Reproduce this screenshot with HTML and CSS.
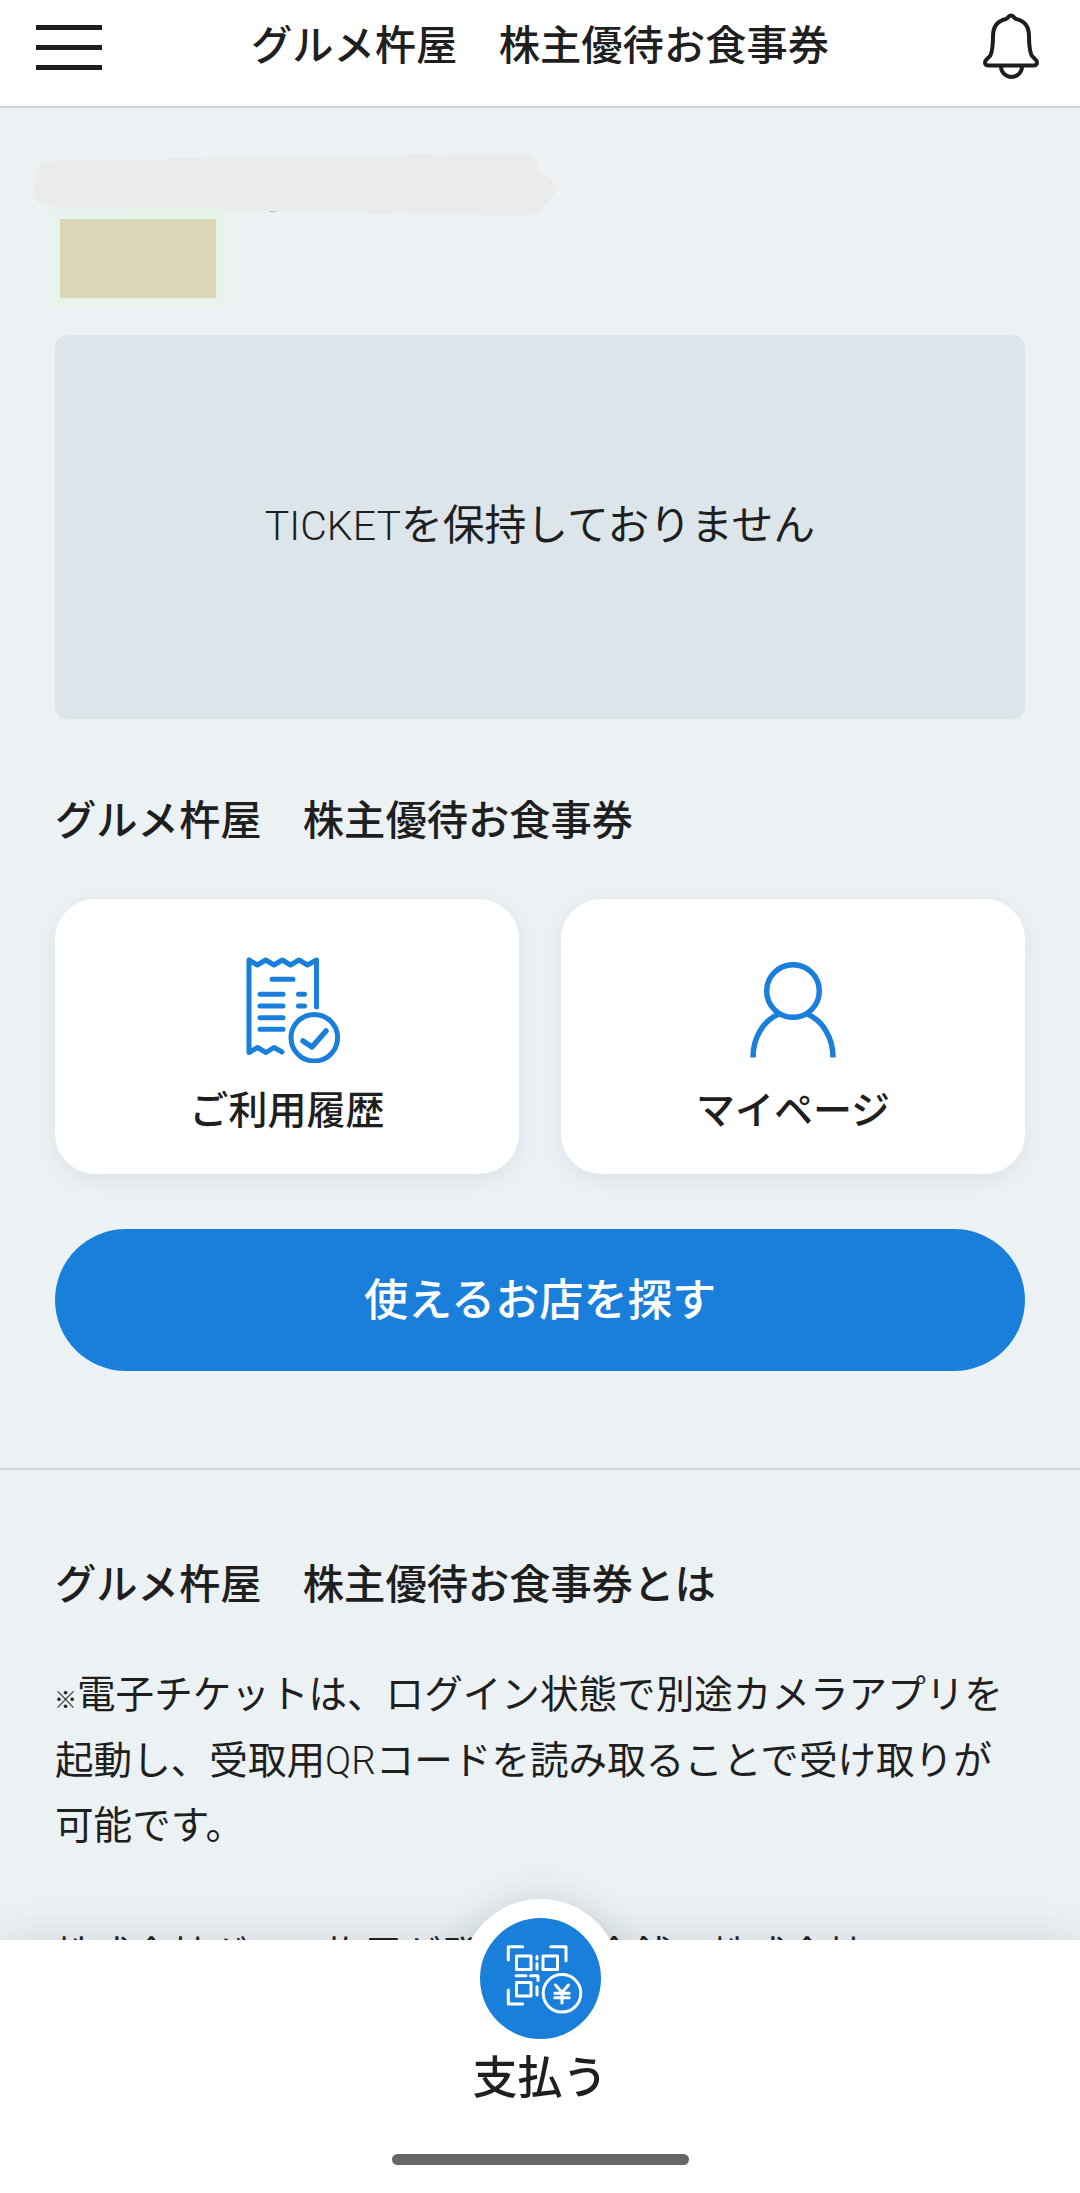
FILE: index.html
```html
<!DOCTYPE html>
<html lang="ja">
<head>
<meta charset="utf-8">
<title>グルメ杵屋 株主優待お食事券</title>
<link rel="stylesheet" href="styles.css">
</head>
<body>
<header class="topbar">
  <div class="burger"><span></span><span></span><span></span></div>
  <h1 class="topbar-title">グルメ杵屋　株主優待お食事券</h1>
  <svg class="bell" viewBox="0 0 56 66" width="56" height="66" fill="none" stroke="#1e1e1e" stroke-width="4" stroke-linejoin="round">
    <path d="M28 2.5C26 2.5 25 5 23 6C14 8 10 14 10 23C10 30 9.5 36 8 41C7 45 2 46 2 49.5C2 51.5 3.5 52.5 5 52.5H51C52.5 52.5 54 51.5 54 49.5C54 46 49 45 48 41C46.5 36 46 30 46 23C46 14 42 8 33 6C31 5 30 2.5 28 2.5Z"/>
    <path d="M18 53.5a10.500 10.500 0 0 0 21 0"/>
  </svg>
</header>

<main>
  <section class="account">
    <svg class="mask" viewBox="0 0 530 70" width="530" height="70">
      <ellipse cx="243" cy="61" rx="4" ry="1.200" fill="#b9bcbe"/>
      <ellipse cx="305" cy="61" rx="4" ry="1.200" fill="#c4c7c9"/>
      <path fill="#ebebeb" d="M17 11L493 3Q508 3 508 18L509 24Q525 26 525 40Q525 48 517 52Q510 66 495 66L28 57Q3 57 3 41Q3 34 6 28Q5 12 17 11Z"/>
    </svg>
    <div class="member-code"><div class="member-code-inner"></div></div>
  </section>

  <div class="ticket-empty">
    <p><span class="latin">TICKET</span>を保持しておりません</p>
  </div>

  <h2 class="section-title">グルメ杵屋　株主優待お食事券</h2>

  <div class="cards">
    <a class="card">
      <span class="card-icon">
        <svg viewBox="0 0 106 106" width="106" height="106" fill="none" stroke="#1a7fdb" stroke-width="5" stroke-linecap="round" stroke-linejoin="round">
          <path d="M82.500 50V3L73.500 8L65 3L56.500 8L48.300 3L40 8L31.700 3L23.300 8L15 3V95.500L23.500 90.500L32 95.500L40 90.500L48 95"/>
          <path d="M38 22.300H59M26 37.300H49M26 49H49M26 60.700H49M26 72.300H49M64.500 37.300H70.500M64.500 49H70.500"/>
          <circle cx="80.300" cy="80.700" r="23.300"/>
          <path d="M69 84L78 90L92 74" stroke-width="5.500"/>
        </svg>
      </span>
      <span class="card-label">ご利用履歴</span>
    </a>
    <a class="card">
      <span class="card-icon">
        <svg viewBox="0 0 86 96" width="86" height="96" fill="none" stroke="#1a7fdb" stroke-width="5.500">
          <circle cx="43" cy="29" r="26.300"/>
          <path d="M3 95.500C3 75 14 58 29 52M57 52C72 58 83 75 83 95.500"/>
        </svg>
      </span>
      <span class="card-label">マイページ</span>
    </a>
  </div>

  <a class="shop-button">使えるお店を探す</a>

  <hr class="divider">

  <h2 class="section-title about-title">グルメ杵屋　株主優待お食事券とは</h2>
  <p class="about-text"><span class="note-mark">※</span>電子チケットは、ログイン状態で別途カメラアプリを起動し、受取用<span class="latin">QR</span>コードを読み取ることで受け取りが可能です。</p>
  <p class="about-text about-next">株式会社グルメ杵屋が発行する金銭・株式会社</p>
</main>

<nav class="paybar">
  <div class="paybar-panel">
    <span class="paybar-label">支払う</span>
    <span class="home-indicator"></span>
  </div>
  <div class="pay-halo"></div>
  <a class="pay-button">
    <svg viewBox="0 0 121 121" width="121" height="121" fill="none" stroke="#fff" stroke-width="3" stroke-linecap="round" stroke-linejoin="round">
      <path d="M28.300 42V28.700H42.700M70.700 28.700H86V42.700M28.300 72V86H42.700"/>
      <rect x="36.500" y="38" width="14.500" height="13.500"/>
      <rect x="63" y="38" width="14.500" height="13.500"/>
      <rect x="36.500" y="64.500" width="14.500" height="13.500"/>
      <path d="M57 38.500V41M57 45.500V51M36 57.700H46M50.500 57.700H58V62.500M57 68.700V77"/>
      <circle cx="82" cy="75.300" r="18.800"/>
      <path d="M75.500 67L82 74.500L88.500 67M82 74.500V85M74.800 75.300H89.200M74.800 79.800H89.200"/>
    </svg>
  </a>
</nav>
</body>
</html>
```

FILE: styles.css
```css
* {
  box-sizing: border-box;
}

html,
body {
  margin: 0;
  padding: 0;
  height: 2193px;
  overflow: hidden;
}

body {
  background: #ecf1f4;
  color: #1f1f1f;
  font-family: "Noto Sans CJK JP", "Noto Sans", sans-serif;
}

h1,
h2,
p {
  margin: 0;
}

/* top bar */
.topbar {
  display: grid;
  grid-template-columns: 1fr auto 1fr;
  align-items: start;
  height: 108px;
  padding: 0 36px;
  background: #fff;
  border-bottom: 2px solid #d0d6da;
}

.burger {
  display: flex;
  flex-direction: column;
  gap: 15px;
  width: 66px;
  margin-top: 25px;
}

.burger span {
  display: block;
  height: 5px;
  background: #1e1e1e;
}

.topbar-title {
  font-size: 41.3px;
  font-weight: 500;
  line-height: 60px;
  margin-top: 12px;
  white-space: nowrap;
}

.bell {
  justify-self: end;
  margin: 13px 5px 0 0;
}

/* member block */
.account {
  position: relative;
  padding: 101px 0 0 49px;
}

.mask {
  position: absolute;
  left: 30px;
  top: 42px;
}

.member-code {
  position: relative;
  width: 177px;
  height: 99px;
  padding: 10px 10px 10px 11px;
  background: #e8f3ec;
}

.member-code-inner {
  height: 79px;
  background: #dbd7b6;
}

/* empty ticket panel */
.ticket-empty {
  display: flex;
  align-items: center;
  justify-content: center;
  height: 384px;
  margin: 27px 55px 0;
  padding-bottom: 11px;
  border-radius: 12px;
  background: #dce5ea;
  font-size: 41.8px;
  line-height: 60px;
}

.latin {
  font-family: Roboto, sans-serif;
  font-weight: 300;
  line-height: 0;
}

.ticket-empty .latin {
  font-size: 41px;
}

.section-title {
  margin: 68px 55px 0;
  font-size: 41.3px;
  font-weight: 500;
  line-height: 60px;
  white-space: nowrap;
}

/* shortcut cards */
.cards {
  display: grid;
  grid-template-columns: 464px 464px;
  gap: 42px;
  margin: 52px 55px 0;
}

.card {
  display: flex;
  flex-direction: column;
  align-items: center;
  height: 275px;
  padding-top: 58px;
  border-radius: 40px;
  background: #fff;
  box-shadow: 0 6px 22px rgba(60, 80, 95, 0.09);
}

.card-icon {
  display: flex;
  align-items: center;
  height: 106px;
}

.card-label {
  margin-top: 19px;
  font-size: 39px;
  font-weight: 500;
  line-height: 50px;
}

.shop-button {
  display: flex;
  align-items: center;
  justify-content: center;
  height: 142px;
  margin: 55px 55px 0;
  padding-bottom: 6px;
  border-radius: 71px;
  background: #1a7fdb;
  color: #fff;
  font-size: 44.2px;
  font-weight: 500;
}

.divider {
  height: 2px;
  margin: 97px 0 0;
  border: 0;
  background: #d0d6da;
}

.about-title {
  margin-top: 81px;
}

.about-text {
  margin: 48px 55px 0;
  font-size: 38.6px;
  line-height: 65.5px;
}

.about-next {
  margin-top: 64px;
  white-space: nowrap;
}

.note-mark {
  margin-left: -1px;
  font-size: 23px;
  line-height: 0;
}

/* fixed pay bar */
.paybar {
  position: fixed;
  left: 0;
  right: 0;
  bottom: 0;
  height: 294px;
}

.paybar-panel {
  display: flex;
  flex-direction: column;
  align-items: center;
  height: 253px;
  margin-top: 41px;
  padding-top: 105px;
  background: #fff;
  box-shadow: 0 0 44px rgba(50, 70, 85, 0.14);
}

.paybar-label {
  font-size: 45px;
  font-weight: 500;
  line-height: 60px;
}

.home-indicator {
  width: 297px;
  height: 11px;
  margin-top: 49px;
  border-radius: 6px;
  background: #676767;
}

.pay-halo {
  position: absolute;
  left: 461px;
  top: 0;
  width: 159px;
  height: 159px;
  border-radius: 50%;
  background: #fff;
  box-shadow: 0 0 40px rgba(50, 70, 85, 0.16);
  clip-path: inset(-70px -70px 118px -70px);
}

.pay-button {
  position: absolute;
  left: 480px;
  top: 19px;
  display: flex;
  width: 121px;
  height: 121px;
  border-radius: 50%;
  background: #1a7fdb;
}
```
